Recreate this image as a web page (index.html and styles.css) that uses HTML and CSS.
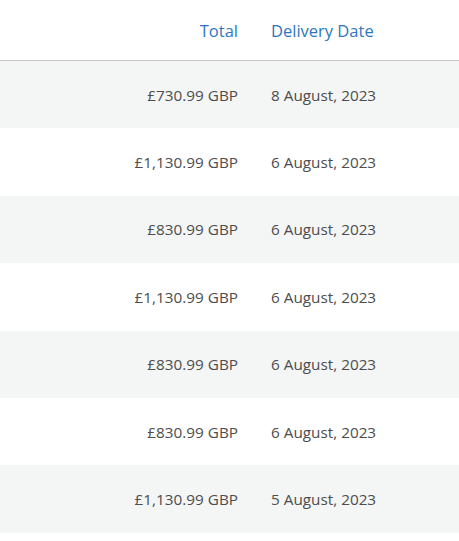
FILE: index.html
```html
<!DOCTYPE html>
<html lang="en">
<head>
    <meta charset="UTF-8">
    <meta name="viewport" content="width=device-width, initial-scale=1.0">
    <title>Orders</title>
    <link rel="stylesheet" href="styles.css">
</head>
<body>

    <table class="orders">
        <thead>
            <tr>
                <th class="spacer"></th>
                <th class="col-total">Total</th>
                <th class="col-date">Delivery Date</th>
            </tr>
        </thead>
        <tbody>
            <tr><td></td><td class="col-total">£730.99 GBP</td><td class="col-date">8 August, 2023</td></tr>
            <tr><td></td><td class="col-total">£1,130.99 GBP</td><td class="col-date">6 August, 2023</td></tr>
            <tr><td></td><td class="col-total">£830.99 GBP</td><td class="col-date">6 August, 2023</td></tr>
            <tr><td></td><td class="col-total">£1,130.99 GBP</td><td class="col-date">6 August, 2023</td></tr>
            <tr><td></td><td class="col-total">£830.99 GBP</td><td class="col-date">6 August, 2023</td></tr>
            <tr><td></td><td class="col-total">£830.99 GBP</td><td class="col-date">6 August, 2023</td></tr>
            <tr><td></td><td class="col-total">£1,130.99 GBP</td><td class="col-date">5 August, 2023</td></tr>
        </tbody>
    </table>

</body>
</html>
```

FILE: styles.css
```css
body {
    font-family: "Open Sans", "Noto Sans", Arial, sans-serif;
    background-color: #fff;
    color: #4d4d4d;
    margin: 0;
    padding: 0;
}
.orders {
    width: 100%;
    border-collapse: collapse;
    font-size: 15.3px;
}
.orders th {
    font-weight: normal;
    font-size: 16.5px;
    color: #2f77bd;
    height: 60px;
    padding: 0;
    border-bottom: 1px solid #c6c6c6;
}
.orders td {
    height: 67.4px;
    padding: 0;
}
.orders tbody tr:nth-child(odd) {
    background-color: #f4f5f5;
}
.orders .col-total {
    text-align: right;
    padding-right: 33px;
    white-space: nowrap;
}
.orders .col-date {
    text-align: left;
    width: 188px;
    white-space: nowrap;
}
```
